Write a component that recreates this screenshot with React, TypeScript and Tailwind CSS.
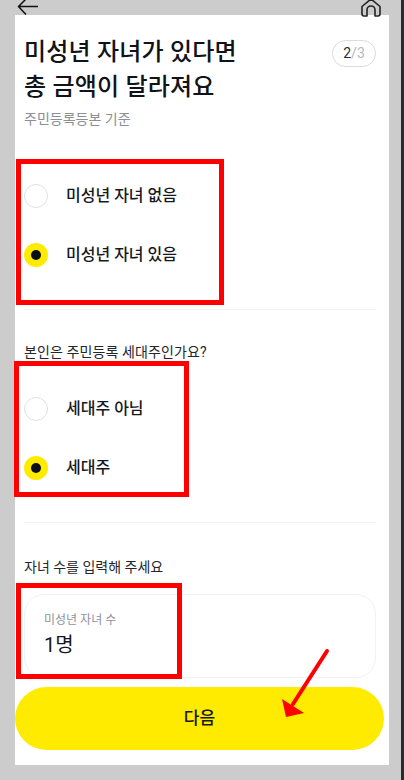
const font = "font-['Roboto','Noto_Sans_CJK_KR',sans-serif]"

function Radio({ label, checked }: { label: string; checked?: boolean }) {
  return (
    <div className="flex items-center h-[59px]">
      {checked ? (
        <span className="flex items-center justify-center w-6 h-6 rounded-full bg-[#ffeb00]">
          <span className="w-[10px] h-[10px] rounded-full bg-[#0b0f19]" />
        </span>
      ) : (
        <span className="w-6 h-6 rounded-full border border-[#dfe1e5] bg-white" />
      )}
      <span className="ml-[18px] text-[16px] font-medium text-[#16181d]">{label}</span>
    </div>
  )
}

export default function App() {
  return (
    <div className={`relative w-[404px] h-[780px] overflow-hidden bg-[#cccccc] pt-[15px] pl-[15px] ${font}`}>
      <div className="w-[374px] h-[750px] bg-white pl-[9px] pr-[13px] pt-[20px]">
        <div className="flex justify-between">
          <div>
            <h1 className="text-[24px] leading-[35px] font-medium tracking-[0.2px] text-[#111318]">
              미성년 자녀가 있다면
              <br />총 금액이 달라져요
            </h1>
            <p className="mt-[4px] text-[14px] leading-5 text-[#8b8f96]">주민등록등본 기준</p>
          </div>
          <div className="flex items-center justify-center w-11 h-[27px] mt-[5px] rounded-full border border-[#d9dbe0] text-[14px]">
            <span className="text-[#2a2d33]">2</span>
            <span className="text-[#b4b7bd]">/3</span>
          </div>
        </div>

        <div className="mt-[37px] pb-[25px] border-b border-[#f3f3f4]">
          <Radio label="미성년 자녀 없음" />
          <Radio label="미성년 자녀 있음" checked />
        </div>

        <p className="mt-[32px] text-[14px] leading-5 tracking-[0.1px] text-[#24262b]">본인은 주민등록 세대주인가요?</p>
        <div className="mt-[17px] pb-[25px] border-b border-[#f3f3f4]">
          <Radio label="세대주 아님" />
          <Radio label="세대주" checked />
        </div>

        <p className="mt-[34px] text-[14px] leading-5 text-[#24262b]">자녀 수를 입력해 주세요</p>
        <div className="mt-[17px] h-[84px] rounded-[20px] border border-[#f2f2f4] pl-[19px] pt-[17px]">
          <p className="text-[12px] leading-4 text-[#8f9299]">미성년 자녀 수</p>
          <p className="mt-[3px] text-[20px] leading-7 text-[#16181d]">1명</p>
        </div>
      </div>

      {/* back / home */}
      <svg className="absolute left-[17px] top-0" width="22" height="16" viewBox="0 0 22 16" fill="none" stroke="#111" strokeWidth="1.5">
        <path d="M21 6.5H2M9 -1L1.5 6.5L9 14.5" />
      </svg>
      <svg className="absolute left-[361px] top-0" width="20" height="17" viewBox="0 0 20 17" fill="none" stroke="#222" strokeWidth="1.6" strokeLinejoin="round">
        <path d="M1 6.5L10 -1L19 6.5V14a2 2 0 0 1-2 2h-3V10a4 4 0 0 0-8 0v6H3a2 2 0 0 1-2-2Z" />
      </svg>

      <button className="absolute left-[15px] top-[687px] w-[369px] h-[63px] rounded-full bg-[#ffeb00] text-[17px] font-medium text-[#16181d]">
        다음
      </button>

      {/* annotations */}
      <div className="absolute left-[16px] top-[159px] w-[208px] h-[146px] border-[5px] border-[#ff0000]" />
      <div className="absolute left-[14px] top-[361px] w-[175px] h-[136px] border-[5px] border-[#ff0000]" />
      <div className="absolute left-[16px] top-[583px] w-[166px] h-[96px] border-[5px] border-[#ff0000]" />
      <svg className="absolute left-[280px] top-[648px]" width="50" height="72" viewBox="0 0 50 72" fill="none">
        <path d="M47 3L13 56" stroke="#ff0000" strokeWidth="4" strokeLinecap="round" />
        <path d="M2 51L6 69L24 65Z" fill="#ff0000" />
      </svg>
      <div className="absolute right-0 top-0 w-[3px] h-full bg-[#2b2b2b]" />
    </div>
  )
}
